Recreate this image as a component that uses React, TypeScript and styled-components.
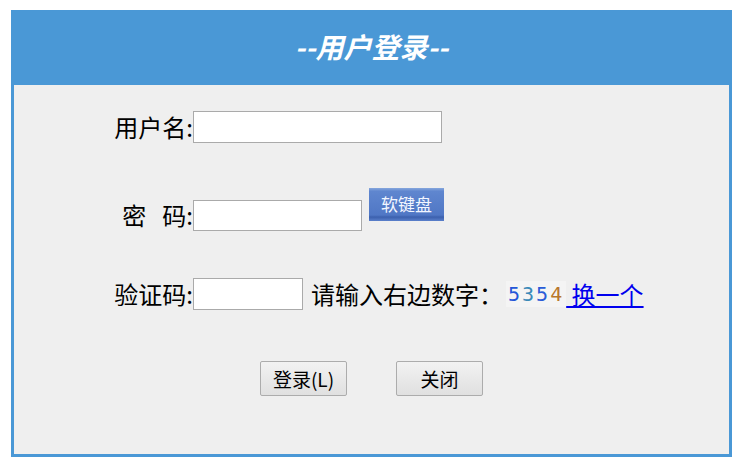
import styled, { createGlobalStyle } from "styled-components"

const GlobalStyle = createGlobalStyle`
  body {
    margin: 0;
    background: #ffffff;
    font-family: "Noto Sans CJK SC", "Noto Sans", sans-serif;
  }
`

const CAPTCHA = [
  { d: "5", c: "#2457d8" },
  { d: "3", c: "#3b8ab9" },
  { d: "5", c: "#2a5cd8" },
  { d: "4", c: "#b8772c" },
]

export default function App() {
  return (
    <>
      <GlobalStyle />
      <Panel>
        <Header>--用户登录--</Header>
        <Body>
          <Form>
            <Row $mt={26}>
              <Label>用户名:</Label>
              <TextInput $w={249} $h={32} />
            </Row>
            <Row $mt={45}>
              <Label>密&nbsp;&nbsp;&nbsp;码:</Label>
              <TextInput type="password" $w={169} $h={31} />
              <KeyboardButton>软键盘</KeyboardButton>
            </Row>
            <Row $mt={47}>
              <Label>验证码:</Label>
              <TextInput $w={110} $h={32} />
              <Hint>请输入右边数字：</Hint>
              <Captcha>
                {CAPTCHA.map((x, i) => (
                  <span key={i} style={{ color: x.c }}>{x.d}</span>
                ))}
              </Captcha>
              <Link href="#">&nbsp;换一个</Link>
            </Row>
          </Form>
          <Buttons>
            <Button>登录(L)</Button>
            <Button>关闭</Button>
          </Buttons>
        </Body>
      </Panel>
    </>
  )
}

const Panel = styled.div`
  margin: 10px 0 0 11px;
  width: 721px;
  box-sizing: border-box;
  border: 3px solid #4a98d6;
  border-top: 0;
  background: #efefef;
`

const Header = styled.div`
  height: 75px;
  background: #4a98d6;
  color: #ffffff;
  font-size: 28px;
  font-weight: bold;
  font-style: italic;
  display: flex;
  align-items: center;
  justify-content: center;
  padding-bottom: 3px;
  box-sizing: border-box;
`

const Body = styled.div`
  height: 369px;
  display: flex;
  flex-direction: column;
`

const Form = styled.div`
  display: flex;
  flex-direction: column;
  padding-left: 96px;
`

const Row = styled.div<{ $mt: number }>`
  display: flex;
  align-items: flex-end;
  margin-top: ${p => p.$mt}px;
`

const Label = styled.span`
  width: 83px;
  text-align: right;
  font-size: 24px;
  line-height: 32px;
  color: #000;
  white-space: nowrap;
`

const TextInput = styled.input<{ $w: number; $h: number }>`
  width: ${p => p.$w}px;
  height: ${p => p.$h}px;
  box-sizing: border-box;
  border: 1px solid #aaaaaa;
  background: #ffffff;
  margin: 0;
  padding: 0 4px;
  font-size: 16px;
  outline: none;
`

const KeyboardButton = styled.button`
  width: 75px;
  height: 33px;
  margin: 0 0 10px 7px;
  padding: 0 0 2px;
  border: 0;
  background: linear-gradient(#86a7dd 0, #5f86cf 10%, #5077c5 82%, #3c60ae 88%, #5a80cb 100%);
  color: #f2f6ff;
  font-family: "Noto Sans CJK SC", sans-serif;
  font-size: 17px;
  line-height: 31px;
  cursor: pointer;
`

const Hint = styled.span`
  margin-left: 8px;
  font-size: 24px;
  line-height: 32px;
  color: #000;
  white-space: nowrap;
`

const Captcha = styled.span`
  margin-left: 3px;
  padding: 0 2px;
  background: #f4f4f4;
  font-family: "DejaVu Sans Mono", "Liberation Mono", monospace;
  font-size: 20px;
  letter-spacing: 2px;
  line-height: 26px;
  margin-bottom: 3px;
`

const Link = styled.a`
  font-size: 24px;
  line-height: 32px;
  color: #0000ee;
  text-decoration: underline;
  white-space: nowrap;
`

const Buttons = styled.div`
  display: flex;
  justify-content: center;
  gap: 49px;
  margin-top: 51px;
`

const Button = styled.button`
  height: 35px;
  min-width: 87px;
  padding: 0 10px;
  box-sizing: border-box;
  border: 1px solid #acacac;
  border-radius: 2px;
  background: linear-gradient(#f2f2f2, #e0e0e0);
  font-family: "Noto Sans CJK SC", sans-serif;
  font-size: 19px;
  color: #000;
`
